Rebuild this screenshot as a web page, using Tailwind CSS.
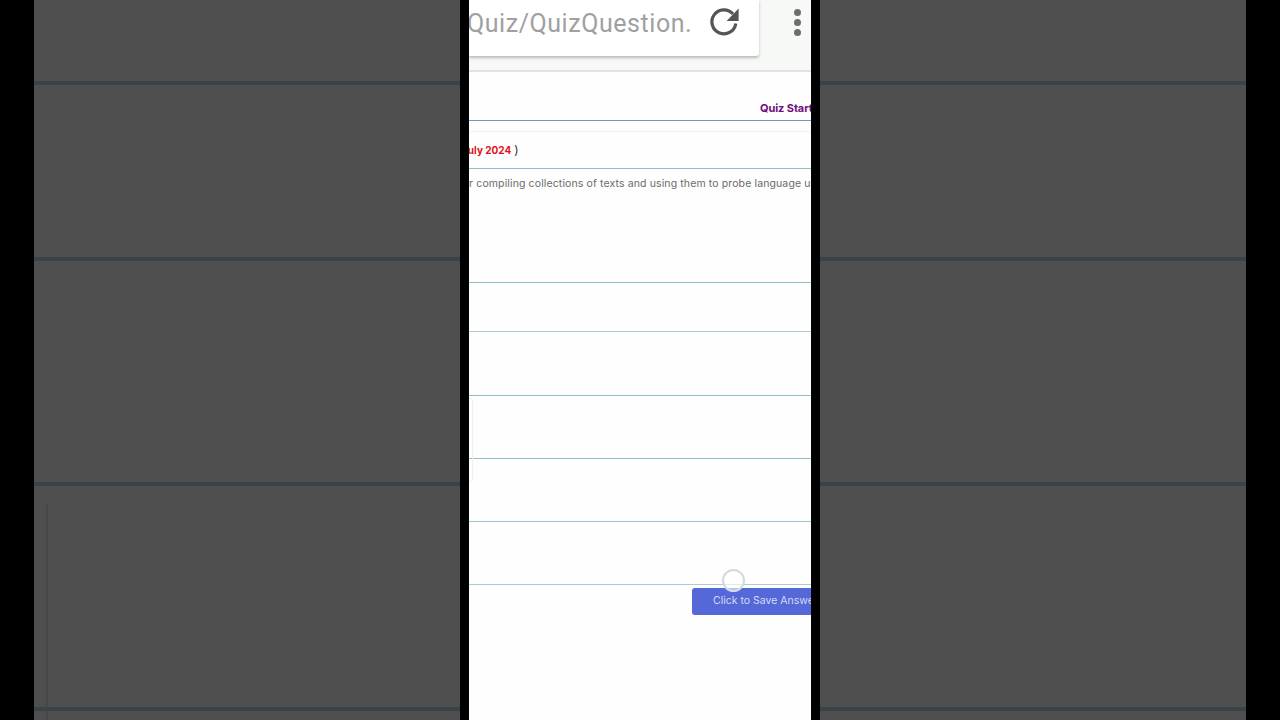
<!DOCTYPE html>
<html>
<head>
<meta charset="utf-8">
<script src="https://cdn.jsdelivr.net/npm/@tailwindcss/browser@4"></script>
</head>
<body class="bg-black overflow-hidden">
<div class="w-[1280px] h-[720px] bg-black flex overflow-hidden font-['Inter',sans-serif]">
  <div class="w-[34px] shrink-0"></div>
  <!-- left blurred panel -->
  <div class="w-[426px] shrink-0 h-full bg-[#4f4f4f] flex flex-col">
    <div class="h-[81px] shrink-0"></div>
    <div class="h-[4px] shrink-0 bg-[#3a4448]"></div>
    <div class="h-[172px] shrink-0"></div>
    <div class="h-[4px] shrink-0 bg-[#3a4448]"></div>
    <div class="h-[221px] shrink-0"></div>
    <div class="h-[4px] shrink-0 bg-[#3a4448]"></div>
    <div class="h-[18px] shrink-0"></div>
    <div class="flex-1 flex flex-col">
      <div class="h-[203px] shrink-0 ml-[12px] border-l-2 border-[#474747]"></div>
      <div class="h-[4px] shrink-0 bg-[#3a4448]"></div>
      <div class="flex-1 ml-[12px] border-l-2 border-[#474747]"></div>
    </div>
  </div>
  <div class="w-[9px] shrink-0"></div>
  <!-- phone column -->
  <div class="w-[342px] shrink-0 h-full bg-[#fdfefd] flex flex-col overflow-hidden relative">
    <div class="h-[72px] shrink-0 bg-[#f6f9f6] border-b-2 border-[#e2e4e2] flex">
      <div class="w-[290px] h-[56px] bg-white rounded-br-[3px] shadow-[0_2px_3px_rgba(0,0,0,0.25)] flex items-center justify-between overflow-hidden pr-[19px]">
        <span class="font-['Roboto',sans-serif] text-[25px] tracking-[0.55px] text-[#a0a0a0] whitespace-nowrap -ml-[2px] mt-[-9px]">Quiz/QuizQuestion.</span>
        <svg class="w-[30px] h-[30px] shrink-0 mt-[-12px] mr-[1px]" viewBox="0 0 30 30" fill="none">
          <path d="M26.8 16.5A12 12 0 1 1 24 7" stroke="#555" stroke-width="3.2" fill="none"/>
          <path d="M17.6 14 L29.6 14 L29.6 1.4 Z" fill="#555"/>
        </svg>
      </div>
      <div class="flex-1 flex flex-col items-center gap-[3px] pt-[9px] pl-[25px]">
        <span class="w-[7px] h-[7px] rounded-full bg-[#6e6e6e]"></span>
        <span class="w-[7px] h-[7px] rounded-full bg-[#6e6e6e]"></span>
        <span class="w-[7px] h-[7px] rounded-full bg-[#6e6e6e]"></span>
      </div>
    </div>
    <div class="h-[49px] shrink-0 border-b border-[#6f9cae] flex items-end overflow-hidden pl-[291px] pb-[4px]">
      <span class="text-[11px] font-bold tracking-[-0.1px] text-[#6f0f80] whitespace-nowrap leading-[16px]">Quiz Start</span>
    </div>
    <div class="h-[11px] shrink-0 border-b border-[#f0f0f0]"></div>
    <div class="h-[37px] shrink-0 border-b border-[#94bccb] flex items-center overflow-hidden">
      <span class="text-[10px] font-bold text-[#e0141a] whitespace-nowrap -ml-[7px]">July 2024</span>
      <span class="text-[12px] text-[#333] ml-[3px]">)</span>
    </div>
    <div class="h-[114px] shrink-0 border-b border-[#94bccb] overflow-hidden pt-[7px]">
      <p class="text-[10.5px] leading-[16px] text-[#6b6b6b] whitespace-nowrap -ml-[10px] tracking-[0.12px]">for compiling collections of texts and using them to probe language use</p>
    </div>
    <div class="h-[49px] shrink-0 border-b border-[#aacbd8]"></div>
    <div class="h-[64px] shrink-0 border-b border-[#94bccb]"></div>
    <div class="h-[63px] shrink-0 border-b border-[#94bccb]"></div>
    <div class="h-[63px] shrink-0 border-b border-[#9cc2d0]"></div>
    <div class="h-[63px] shrink-0 border-b border-[#aacbd8]"></div>
    <div class="flex justify-end pt-[3px]">
      <div class="w-[119px] h-[27px] bg-[#5468d8] rounded-l-[3px] flex items-center overflow-hidden pl-[21px]">
        <span class="text-[10.5px] text-[#d5dcf7] whitespace-nowrap mt-[-1px]">Click to Save Answer</span>
      </div>
    </div>
    <!-- faint overlay box -->
    <div class="absolute left-0 top-[398px] w-[4px] h-[84px] border-r border-y border-[#f0f0f0] rounded-r-[3px]"></div>
    <!-- touch indicator -->
    <div class="absolute left-[253px] top-[569px] w-[23px] h-[23px] rounded-full border-2 border-[#d3d9e2] bg-white/60"></div>
  </div>
  <div class="w-[9px] shrink-0"></div>
  <!-- right blurred panel -->
  <div class="w-[426px] shrink-0 h-full bg-[#4f4f4f] flex flex-col">
    <div class="h-[81px] shrink-0"></div>
    <div class="h-[4px] shrink-0 bg-[#3a4448]"></div>
    <div class="h-[172px] shrink-0"></div>
    <div class="h-[4px] shrink-0 bg-[#3a4448]"></div>
    <div class="h-[221px] shrink-0"></div>
    <div class="h-[4px] shrink-0 bg-[#3a4448]"></div>
    <div class="h-[221px] shrink-0"></div>
    <div class="h-[4px] shrink-0 bg-[#3a4448]"></div>
  </div>
  <div class="w-[34px] shrink-0"></div>
</div>
</body>
</html>
